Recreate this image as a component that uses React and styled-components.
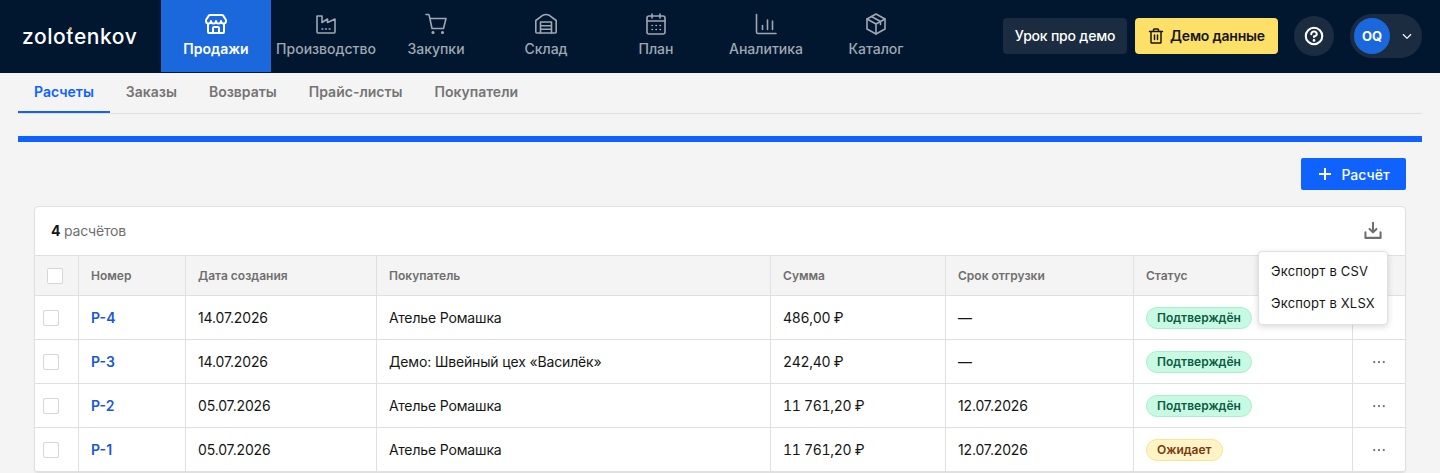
import React from 'react'
import styled, { createGlobalStyle } from 'styled-components'
import { PiCaretDownBold, PiQuestionBold, PiDownloadSimpleBold, PiDotsThreeBold } from 'react-icons/pi'

const Global = createGlobalStyle`
  html, body { margin: 0; padding: 0; background: #f4f4f4; }
  body { font-family: Inter, "Noto Sans", sans-serif; height: 473px; overflow: hidden; }
  * { box-sizing: border-box; }
`

const Ico = ({ size = 24, sw = 1.5, children }) => (
  <svg width={size} height={size} viewBox="0 0 24 24" fill="none" stroke="currentColor" strokeWidth={sw} strokeLinecap="round" strokeLinejoin="round">
    {children}
  </svg>
)

const StoreIcon = (p) => (
  <Ico {...p}>
    <path d="M6 3h12c.5 0 .9.2 1.2.6L22 8v1a2.5 2.5 0 0 1-5 0 2.5 2.5 0 0 1-5 0 2.5 2.5 0 0 1-5 0 2.5 2.5 0 0 1-5 0V8l2.8-4.4C5.1 3.2 5.5 3 6 3z" />
    <path d="M4 12.5V20a1 1 0 0 0 1 1h14a1 1 0 0 0 1-1v-7.5" />
    <path d="M9 21v-5a1 1 0 0 1 1-1h4a1 1 0 0 1 1 1v5" />
  </Ico>
)
const FactoryIcon = (p) => (
  <Ico {...p}>
    <path d="M3 4h5v6.5L13.5 7v3.5L21 7v13a1 1 0 0 1-1 1H4a1 1 0 0 1-1-1z" />
    <path d="M8 17h.8M11.6 17h.8M15.2 17h.8" />
  </Ico>
)
const CartIcon = (p) => (
  <Ico {...p}>
    <path d="M2 2.5h2.2c.5 0 .9.3 1 .8L8 16.5h11.5L22 6.5H5.8" />
    <circle cx="9" cy="20.5" r="0.8" fill="currentColor" />
    <circle cx="18.5" cy="20.5" r="0.8" fill="currentColor" />
  </Ico>
)
const WarehouseIcon = (p) => (
  <Ico {...p}>
    <path d="M1.8 8.5 9 3.2q3-1.4 6 0l7.2 5.3V20a1 1 0 0 1-1 1H2.8a1 1 0 0 1-1-1z" />
    <path d="M6.5 21V10h11v11M6.5 13.7h11M6.5 17.3h11" />
  </Ico>
)
const CalendarIcon = (p) => (
  <Ico {...p}>
    <rect x="3" y="4" width="18" height="18" rx="2" />
    <path d="M3 9h18M8 2v4M16 2v4" />
    <path d="M8 13.5h.4M12 13.5h.4M16 13.5h.4M8 17.5h.4M12 17.5h.4M16 17.5h.4" />
  </Ico>
)
const ChartIcon = (p) => (
  <Ico {...p}>
    <path d="M2.5 2.5V20a1.5 1.5 0 0 0 1.5 1.5h18" />
    <path d="M8.5 17.5v-4M13.5 17.5V8M18.5 17.5V9" />
  </Ico>
)
const CubeIcon = (p) => (
  <Ico {...p}>
    <path d="M12 2l9 5v10l-9 5-9-5V7z" />
    <path d="M3 7l9 5 9-5M12 12v10M7.5 4.5l9 5v3" />
  </Ico>
)
const TrashIcon = () => (
  <svg width="16" height="18" viewBox="0 0 16 18" fill="none" stroke="currentColor" strokeWidth="1.5" strokeLinecap="round" strokeLinejoin="round">
    <path d="M1.5 4.5h13M5.5 4.5V2.8a.8.8 0 0 1 .8-.8h3.4a.8.8 0 0 1 .8.8v1.7" />
    <path d="M3 4.5v10.7a.8.8 0 0 0 .8.8h8.4a.8.8 0 0 0 .8-.8V4.5M6.5 8v4.5M9.5 8v4.5" />
  </svg>
)
const PlusIcon = () => (
  <svg width="16" height="16" viewBox="0 0 16 16" fill="none" stroke="currentColor" strokeWidth="2">
    <path d="M8 2v12M2 8h12" />
  </svg>
)

const nav = [
  { label: 'Продажи', icon: StoreIcon, active: true },
  { label: 'Производство', icon: FactoryIcon },
  { label: 'Закупки', icon: CartIcon },
  { label: 'Склад', icon: WarehouseIcon },
  { label: 'План', icon: CalendarIcon },
  { label: 'Аналитика', icon: ChartIcon },
  { label: 'Каталог', icon: CubeIcon },
]

const tabs = ['Расчеты', 'Заказы', 'Возвраты', 'Прайс-листы', 'Покупатели']

const columns = [44, 107, 191, 394, 175, 188, 219, 52]

const rows = [
  { id: 'Р-4', date: '14.07.2026', buyer: 'Ателье Ромашка', sum: '486,00 ₽', due: '—', status: 'Подтверждён' },
  { id: 'Р-3', date: '14.07.2026', buyer: 'Демо: Швейный цех «Василёк»', sum: '242,40 ₽', due: '—', status: 'Подтверждён' },
  { id: 'Р-2', date: '05.07.2026', buyer: 'Ателье Ромашка', sum: '11 761,20 ₽', due: '12.07.2026', status: 'Подтверждён' },
  { id: 'Р-1', date: '05.07.2026', buyer: 'Ателье Ромашка', sum: '11 761,20 ₽', due: '12.07.2026', status: 'Ожидает', pending: true },
]

function App() {
  return (
    <>
      <Global />
      <Header>
        <Logo>zolo<LogoT>t</LogoT>enkov</Logo>
        <Nav>
          {nav.map(({ label, icon: Icon, active }) => (
            <NavItem key={label} $active={active}>
              <Icon sw={active ? 2 : 1.6} />
              <span>{label}</span>
            </NavItem>
          ))}
        </Nav>
        <HeaderRight>
          <LessonBtn>Урок про демо</LessonBtn>
          <DemoBtn><TrashIcon />Демо данные</DemoBtn>
          <HelpBtn><PiQuestionBold size={22} /></HelpBtn>
          <UserPill>
            <Avatar>OQ</Avatar>
            <PiCaretDownBold size={12} color="#ffffff" />
          </UserPill>
        </HeaderRight>
      </Header>
      <Content>
        <Tabs>
          {tabs.map((t, i) => (
            <Tab key={t} $active={i === 0}>{t}</Tab>
          ))}
        </Tabs>
        <Progress />
        <Actions>
          <AddBtn><PlusIcon />Расчёт</AddBtn>
        </Actions>
        <Card>
          <Toolbar>
            <Count><b>4</b> расчётов</Count>
            <PiDownloadSimpleBold size={22} color="#6f6f6f" />
          </Toolbar>
          <Menu>
            <MenuItem>Экспорт в CSV</MenuItem>
            <MenuItem>Экспорт в XLSX</MenuItem>
          </Menu>
          <Table>
            <colgroup>
              {columns.map((w, i) => (
                <col key={i} style={{ width: w }} />
              ))}
            </colgroup>
            <thead>
              <tr>
                <Th><Check /></Th>
                <Th>Номер</Th>
                <Th>Дата создания</Th>
                <Th>Покупатель</Th>
                <Th>Сумма</Th>
                <Th>Срок отгрузки</Th>
                <Th>Статус</Th>
                <Th />
              </tr>
            </thead>
            <tbody>
              {rows.map((r) => (
                <tr key={r.id}>
                  <Td $check><Check /></Td>
                  <Td><RowLink>{r.id}</RowLink></Td>
                  <Td>{r.date}</Td>
                  <Td>{r.buyer}</Td>
                  <Td $num>{r.sum}</Td>
                  <Td>{r.due}</Td>
                  <Td><Badge $pending={r.pending}>{r.status}</Badge></Td>
                  <Td $center><PiDotsThreeBold size={18} color="#6f6f6f" /></Td>
                </tr>
              ))}
            </tbody>
          </Table>
        </Card>
      </Content>
    </>
  )
}

export default App

const Header = styled.header`
  height: 73px;
  background: #00172f;
  display: flex;
  align-items: stretch;
`

const Logo = styled.div`
  width: 161px;
  padding-left: 22px;
  display: flex;
  align-items: center;
  color: #fff;
  font-size: 21px;
  font-weight: 500;
  letter-spacing: 0.55px;
`

const LogoT = styled.span`
  position: relative;
  &::before {
    content: '';
    position: absolute;
    top: 3px;
    left: 3px;
    width: 3px;
    height: 3px;
    border-radius: 50%;
    background: #e8a33d;
  }
`

const Nav = styled.nav`
  display: flex;
  height: 72px;
`

const NavItem = styled.div`
  width: 110px;
  display: flex;
  flex-direction: column;
  align-items: center;
  padding-top: 12px;
  gap: 4px;
  background: ${(p) => (p.$active ? '#1a68dc' : 'transparent')};
  color: ${(p) => (p.$active ? '#ffffff' : '#a0a7b2')};
  font-size: 14px;
  line-height: 17px;
  font-weight: ${(p) => (p.$active ? 600 : 500)};
  white-space: nowrap;
`

const HeaderRight = styled.div`
  margin-left: auto;
  padding: 0 18px 1px 0;
  display: flex;
  align-items: center;
`

const LessonBtn = styled.div`
  height: 36px;
  width: 124px;
  padding-bottom: 1px;
  margin-right: 8px;
  border-radius: 4px;
  background: #1c2c40;
  color: #fff;
  display: flex;
  align-items: center;
  justify-content: center;
  font-size: 14px;
  font-weight: 500;
  letter-spacing: -0.2px;
`

const DemoBtn = styled.div`
  height: 36px;
  width: 143px;
  padding-bottom: 1px;
  margin-right: 16px;
  border-radius: 4px;
  background: #fde068;
  color: #161616;
  display: flex;
  align-items: center;
  justify-content: center;
  gap: 6px;
  font-size: 14px;
  font-weight: 600;
  letter-spacing: -0.2px;
`

const HelpBtn = styled.div`
  width: 40px;
  height: 40px;
  margin-right: 16px;
  border-radius: 50%;
  background: #1c2c40;
  color: #fff;
  display: flex;
  align-items: center;
  justify-content: center;
`

const UserPill = styled.div`
  width: 72px;
  height: 44px;
  padding-left: 4px;
  border-radius: 22px;
  background: #1c2c40;
  display: flex;
  align-items: center;
  gap: 11px;
`

const Avatar = styled.div`
  width: 36px;
  height: 36px;
  border-radius: 50%;
  background: #1a68dc;
  color: #fff;
  display: flex;
  align-items: center;
  justify-content: center;
  font-size: 13px;
  font-weight: 700;
`

const Content = styled.main`
  padding: 0 18px;
`

const Tabs = styled.div`
  display: flex;
  height: 41px;
  border-bottom: 1px solid #e0e0e0;
`

const Tab = styled.div`
  height: 40px;
  padding: 0 16px 3px;
  display: flex;
  align-items: center;
  font-size: 14px;
  font-weight: 600;
  color: ${(p) => (p.$active ? '#0f62fe' : '#757575')};
  box-shadow: ${(p) => (p.$active ? 'inset 0 -2px 0 #0f62fe' : 'none')};
`

const Progress = styled.div`
  height: 6px;
  margin-top: 22px;
  background: #0f62fe;
`

const Actions = styled.div`
  display: flex;
  justify-content: flex-end;
  padding: 16px 16px 16px 0;
`

const AddBtn = styled.div`
  width: 105px;
  height: 32px;
  border-radius: 2px;
  background: #0f62fe;
  color: #fff;
  display: flex;
  align-items: center;
  justify-content: center;
  gap: 8px;
  font-size: 14px;
  font-weight: 500;
`

const Card = styled.section`
  position: relative;
  margin: 0 16px;
  background: #fff;
  border: 1px solid #e0e0e0;
  border-radius: 4px;
  box-shadow: 0 1px 2px rgba(0, 0, 0, 0.05);
`

const Toolbar = styled.div`
  height: 48px;
  padding: 0 21px 0 16px;
  display: flex;
  align-items: center;
  justify-content: space-between;
`

const Count = styled.div`
  position: relative;
  top: -1px;
  font-size: 14px;
  letter-spacing: -0.2px;
  color: #6f6f6f;
  b {
    color: #161616;
    font-weight: 700;
  }
`

const Menu = styled.div`
  position: absolute;
  top: 44px;
  right: 17px;
  width: 130px;
  padding: 3px 0 5px;
  background: #fff;
  border: 1px solid #e0e0e0;
  border-radius: 4px;
  box-shadow: 0 2px 6px rgba(0, 0, 0, 0.15);
  z-index: 2;
`

const MenuItem = styled.div`
  height: 32px;
  padding-left: 12px;
  display: flex;
  align-items: center;
  font-size: 13px;
  letter-spacing: 0.2px;
  color: #161616;
  white-space: nowrap;
`

const Table = styled.table`
  width: 1370px;
  table-layout: fixed;
  border-collapse: separate;
  border-spacing: 0;
`

const Th = styled.th`
  height: 41px;
  padding: 0 0 0 12px;
  background: #f4f4f4;
  border-top: 1px solid #e0e0e0;
  border-bottom: 1px solid #e0e0e0;
  border-right: 1px solid #e0e0e0;
  text-align: left;
  font-size: 12px;
  font-weight: 600;
  color: #6f6f6f;
  &:last-child { border-right: 0; }
`

const Td = styled.td`
  height: 44px;
  padding: 0 0 0 ${(p) => (p.$check ? '8px' : '12px')};
  border-bottom: 1px solid #e0e0e0;
  border-right: 1px solid #e0e0e0;
  font-size: 14px;
  letter-spacing: ${(p) => (p.$num ? '-0.3px' : '-0.15px')};
  font-variant-numeric: ${(p) => (p.$num ? 'tabular-nums' : 'normal')};
  color: #161616;
  text-align: ${(p) => (p.$center ? 'center' : 'left')};
  &:last-child { border-right: 0; padding-left: 0; }
  svg { vertical-align: middle; }
`

const Check = styled.span`
  display: block;
  width: 16px;
  height: 16px;
  background: #fff;
  border: 1px solid #d6d6d6;
  border-radius: 2px;
`

const RowLink = styled.span`
  color: #1a56db;
  font-weight: 600;
  letter-spacing: 0;
`

const Badge = styled.span`
  display: inline-flex;
  align-items: center;
  height: 22px;
  padding: 0 10px;
  border-radius: 11px;
  font-size: 12px;
  font-weight: 600;
  letter-spacing: 0;
  vertical-align: middle;
  background: ${(p) => (p.$pending ? '#fff3c8' : '#c8f9e3')};
  border: 1px solid ${(p) => (p.$pending ? '#fde58a' : '#a8f0d0')};
  color: ${(p) => (p.$pending ? '#7a3b0c' : '#0a5c42')};
`
